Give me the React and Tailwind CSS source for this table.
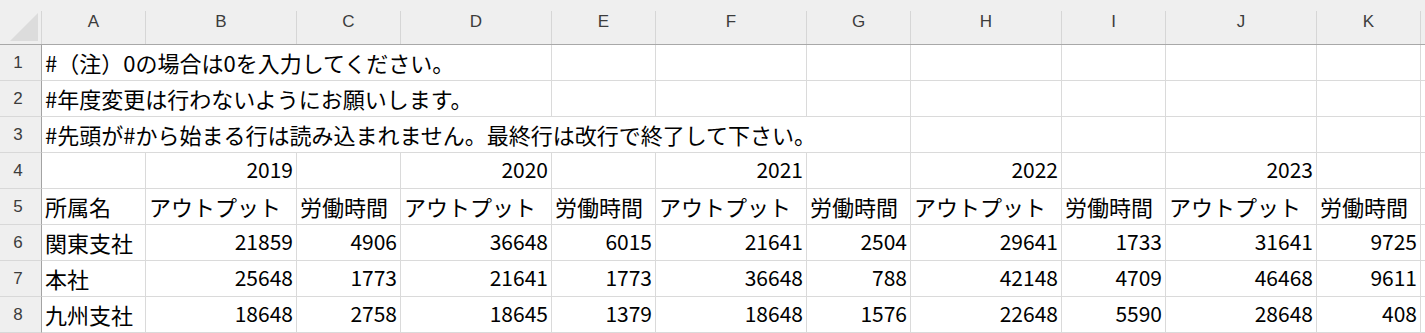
import React from "react";

const COLS = ["A", "B", "C", "D", "E", "F", "G", "H", "I", "J", "K"];

const GRID =
  "grid grid-cols-[42px_104px_151px_104px_151px_104px_151px_104px_151px_104px_151px_104px_1fr]";

const CELL_FONT = "font-['Noto_Sans_CJK_JP','Noto_Sans_CJK_SC',sans-serif]";
const HEAD_FONT = "font-['Liberation_Sans',Arial,sans-serif]";

const rows = [
  { n: 1, span: 4, text: "#（注）0の場合は0を入力してください。" },
  { n: 2, span: 4, text: "#年度変更は行わないようにお願いします。" },
  {
    n: 3,
    span: 7,
    text: "#先頭が#から始まる行は読み込まれません。最終行は改行で終了して下さい。",
  },
  { n: 4, cells: ["", "2019", "", "2020", "", "2021", "", "2022", "", "2023", ""], right: true },
  {
    n: 5,
    cells: [
      "所属名",
      "アウトプット",
      "労働時間",
      "アウトプット",
      "労働時間",
      "アウトプット",
      "労働時間",
      "アウトプット",
      "労働時間",
      "アウトプット",
      "労働時間",
    ],
  },
  {
    n: 6,
    cells: ["関東支社", "21859", "4906", "36648", "6015", "21641", "2504", "29641", "1733", "31641", "9725"],
    numeric: true,
  },
  {
    n: 7,
    cells: ["本社", "25648", "1773", "21641", "1773", "36648", "788", "42148", "4709", "46468", "9611"],
    numeric: true,
  },
  {
    n: 8,
    cells: ["九州支社", "18648", "2758", "18645", "1379", "18648", "1576", "22648", "5590", "28648", "408"],
    numeric: true,
  },
];

function RowHeader({ n }) {
  return (
    <div
      className={`h-[36px] bg-[#efefef] border-r border-r-[#a3a3a3] border-b border-b-[#d8d8d8] flex items-center justify-center pr-[5px] text-[17px] leading-[17px] text-[#3c3c3c] ${HEAD_FONT}`}
    >
      {n}
    </div>
  );
}

function Cell({ children, right, className = "" }) {
  const isNum = typeof children === "string" && /^\d+$/.test(children);
  return (
    <div
      className={`h-[36px] border-r border-b border-[#dadada] flex items-center pb-[2px] px-[3px] whitespace-nowrap text-black ${CELL_FONT} ${
        isNum ? "text-[21px] leading-[21px]" : "text-[22px] leading-[22px]"
      } ${right ? "justify-end" : "justify-start"} ${className}`}
    >
      {children}
    </div>
  );
}

export default function App() {
  return (
    <div className="w-[1425px] h-[333px] overflow-hidden bg-white flex flex-col">
      {/* top strip */}
      <div className="h-[2px] flex bg-[#efefef]">
        <div className="w-[296px] bg-[#d3d3d3] rounded-br-[2px]" />
        <div className="w-[10px]" />
        <div className="flex-1 bg-[#d3d3d3] rounded-bl-[2px]" />
      </div>

      {/* column header */}
      <div className={GRID}>
        <div className="h-[45px] bg-[#efefef] border-b border-b-[#a8a8a8] pt-[11px]">
          <div className="h-full border-r border-r-[#d6d6d6]">
            <svg width="41" height="33" viewBox="0 0 41 33" className="block">
              <polygon points="38,2 38,30 10,30" fill="#dcdcdc" />
            </svg>
          </div>
        </div>
        {COLS.map((c) => (
          <div key={c} className="h-[45px] bg-[#efefef] border-b border-b-[#a8a8a8] pt-[11px]">
            <div
              className={`h-full border-r border-r-[#d6d6d6] flex justify-center pt-[3px] text-[17px] leading-[16px] text-[#3c3c3c] ${HEAD_FONT}`}
            >
              {c}
            </div>
          </div>
        ))}
        <div className="h-[45px] bg-[#efefef] border-b border-b-[#a8a8a8]" />
      </div>

      {/* body */}
      <div className={GRID}>
        {rows.map((r) => (
          <React.Fragment key={r.n}>
            <RowHeader n={r.n} />
            {r.text ? (
              <>
                <Cell className={r.span === 4 ? "col-span-4" : "col-span-7"}>{r.text}</Cell>
                {Array.from({ length: 11 - r.span }).map((_, i) => (
                  <Cell key={i} />
                ))}
              </>
            ) : (
              r.cells.map((v, i) => (
                <Cell key={i} right={r.right || (r.numeric && i > 0)}>
                  {v}
                </Cell>
              ))
            )}
            <div className="h-[36px] border-b border-[#dadada]" />
          </React.Fragment>
        ))}
      </div>
    </div>
  );
}
